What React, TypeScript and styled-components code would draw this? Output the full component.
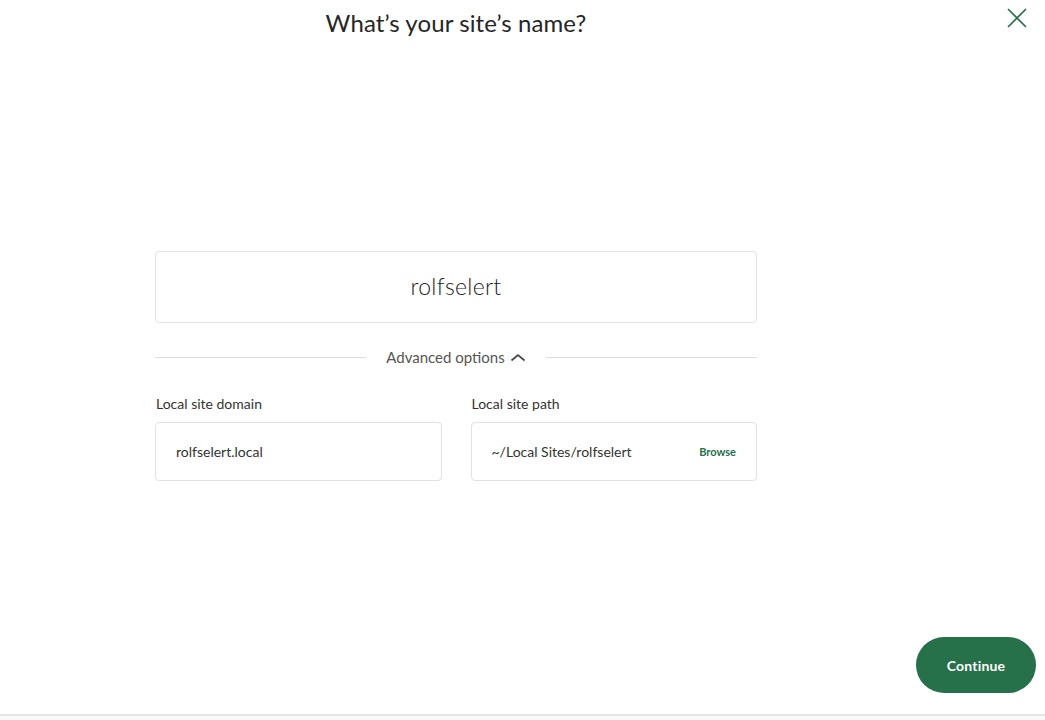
import React from "react";
import styled, { createGlobalStyle } from "styled-components";

const Global = createGlobalStyle`
  html, body { margin: 0; padding: 0; background: #fff; }
  body { font-family: Lato, "Open Sans", sans-serif; color: #333; }
  * { box-sizing: border-box; }
`;

const GREEN = "#26704a";

const Page = styled.div`
  width: 1045px;
  height: 720px;
  position: relative;
  display: flex;
  flex-direction: column;
  overflow: hidden;
`;

const Column = styled.main`
  width: 602px;
  margin-left: 155px;
  display: flex;
  flex-direction: column;
`;

const Title = styled.h1`
  margin: 9px 0 0;
  font-size: 24px;
  line-height: 28px;
  font-weight: 400;
  color: #262626;
  text-align: center;
  letter-spacing: 0.1px;
`;

const CloseButton = styled.button`
  position: absolute;
  top: 7px;
  right: 17px;
  width: 22px;
  height: 22px;
  padding: 0;
  border: none;
  background: none;
  cursor: pointer;
  display: flex;
  align-items: center;
  justify-content: center;
`;

const NameBox = styled.div`
  margin-top: 214px;
  height: 72px;
  border: 1px solid #e2e2e2;
  border-radius: 4px;
  display: flex;
  align-items: center;
  justify-content: center;
  font-size: 23px;
  font-weight: 300;
  letter-spacing: 0.3px;
  color: #222;
  padding-bottom: 2px;
`;

const DividerRow = styled.div`
  margin-top: 23px;
  height: 22px;
  display: flex;
  align-items: center;
  gap: 20px;
`;

const Rule = styled.div`
  flex: 1;
  height: 1px;
  background: #dedede;
`;

const Toggle = styled.div`
  display: flex;
  align-items: center;
  gap: 5px;
  font-size: 15px;
  color: #555;
`;

const Fields = styled.div`
  margin-top: 27px;
  display: grid;
  grid-template-columns: 1fr 1fr;
  column-gap: 29px;
`;

const Field = styled.div`
  display: flex;
  flex-direction: column;
`;

const Label = styled.label`
  font-size: 14px;
  line-height: 18px;
  color: #333;
  padding-left: 1px;
  margin-bottom: 9px;
`;

const InputBox = styled.div`
  height: 59px;
  border: 1px solid #e2e2e2;
  border-radius: 4px;
  padding: 0 20px;
  display: flex;
  align-items: center;
  justify-content: space-between;
  font-size: 14px;
  color: #333;
`;

const Browse = styled.span`
  font-size: 11px;
  font-weight: 700;
  color: ${GREEN};
`;

const Spacer = styled.div`
  flex: 1;
`;

const Footer = styled.div`
  display: flex;
  justify-content: flex-end;
  padding-right: 9px;
  margin-bottom: 21px;
`;

const Continue = styled.button`
  width: 120px;
  height: 56px;
  border-radius: 28px;
  border: none;
  background: ${GREEN};
  color: #fff;
  font-family: inherit;
  font-size: 14px;
  font-weight: 700;
  letter-spacing: 0.2px;
  cursor: pointer;
`;

const BottomBar = styled.div`
  height: 6px;
  border-top: 2px solid #e6e6e6;
  background: #fafafa;
`;

export default function App() {
  return (
    <>
      <Global />
      <Page>
        <CloseButton aria-label="Close">
          <svg width="20" height="20" viewBox="0 0 20 20">
            <path d="M1 1 L19 19 M19 1 L1 19" stroke={GREEN} strokeWidth="1.6" fill="none" />
          </svg>
        </CloseButton>
        <Column>
          <Title>What’s your site’s name?</Title>
          <NameBox>rolfselert</NameBox>
          <DividerRow>
            <Rule />
            <Toggle>
              Advanced options
              <svg width="16" height="9" viewBox="0 0 16 9">
                <path d="M1.5 7.5 L8 2 L14.5 7.5" stroke="#444" strokeWidth="1.7" fill="none" />
              </svg>
            </Toggle>
            <Rule />
          </DividerRow>
          <Fields>
            <Field>
              <Label>Local site domain</Label>
              <InputBox>rolfselert.local</InputBox>
            </Field>
            <Field>
              <Label>Local site path</Label>
              <InputBox>
                ~/Local Sites/rolfselert
                <Browse>Browse</Browse>
              </InputBox>
            </Field>
          </Fields>
        </Column>
        <Spacer />
        <Footer>
          <Continue>Continue</Continue>
        </Footer>
        <BottomBar />
      </Page>
    </>
  );
}
